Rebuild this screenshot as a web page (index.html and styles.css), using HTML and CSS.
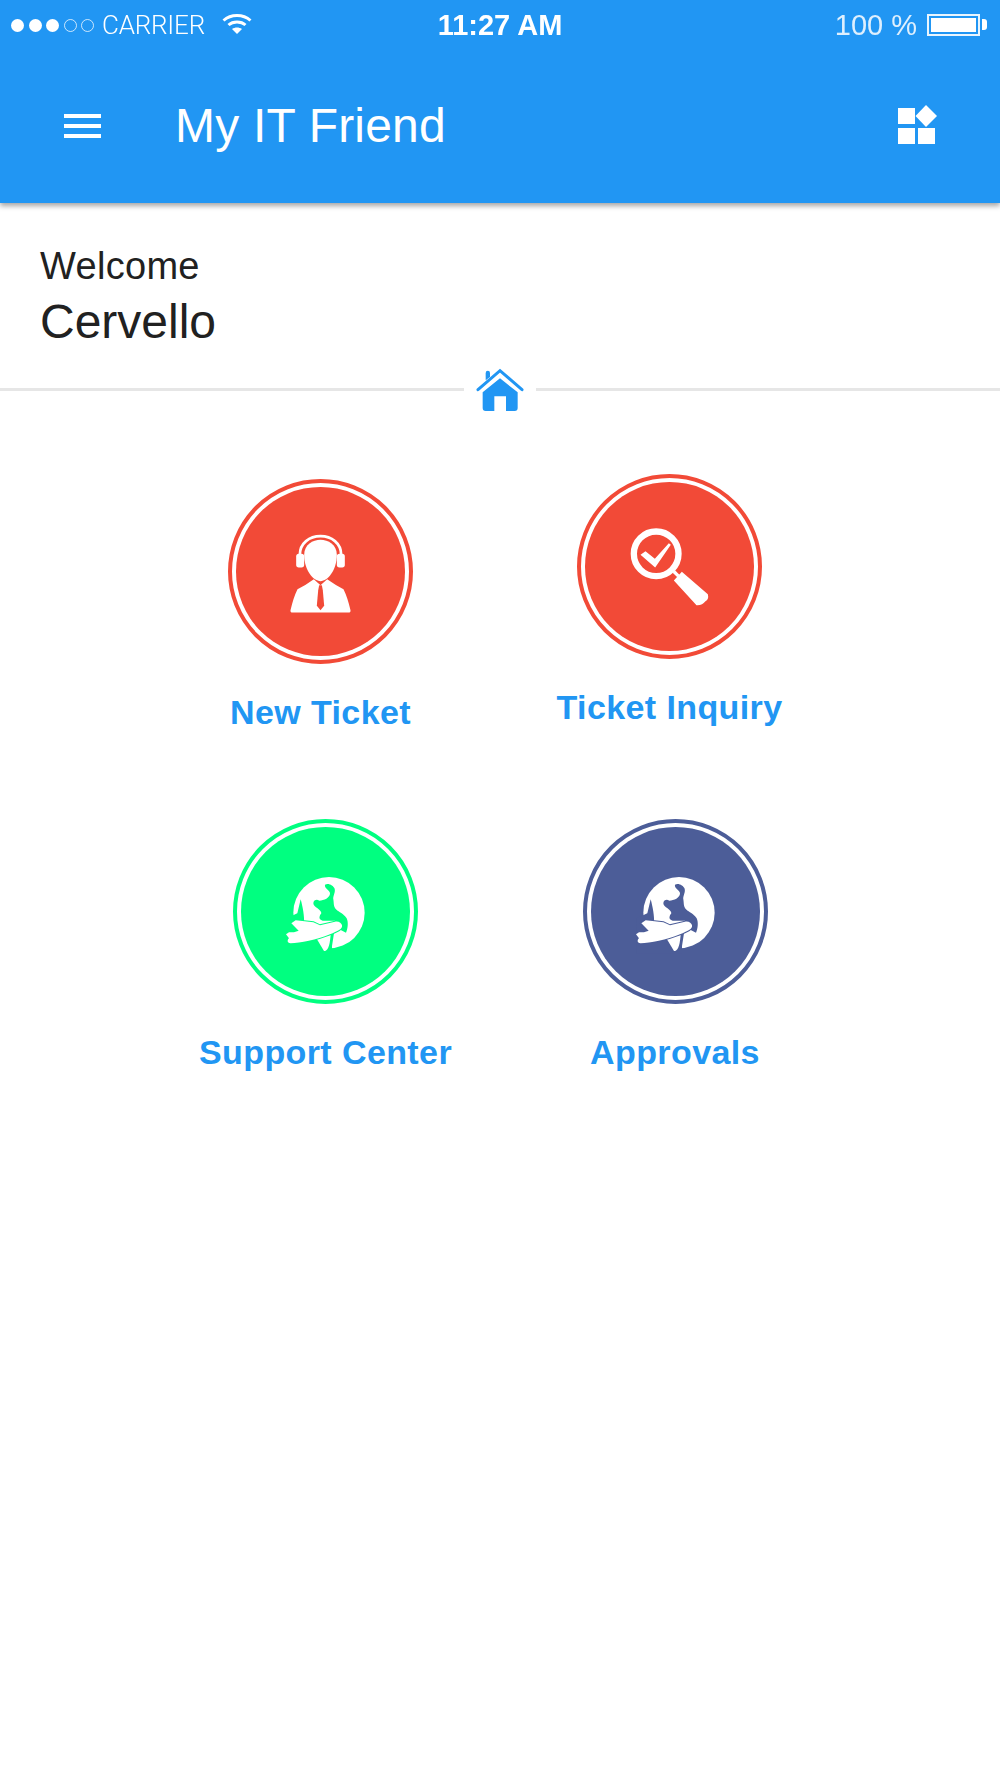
FILE: index.html
```html
<!DOCTYPE html>
<html lang="en">
<head>
<meta charset="utf-8">
<title>My IT Friend</title>
<link rel="stylesheet" href="styles.css">
</head>
<body>
<header class="appbar">
  <div class="status">
    <div class="status-left">
      <span class="dots">
        <i class="dot"></i><i class="dot"></i><i class="dot"></i><i class="dot dot-off"></i><i class="dot dot-off"></i>
      </span>
      <span class="carrier">CARRIER</span>
      <svg class="wifi" viewBox="0 0 30 21" aria-hidden="true">
        <path class="wifi-arc" d="M1.500 7.500C9 .8 21 .8 28.500 7.500"/>
        <path class="wifi-arc" d="M6.500 12C11 8 19 8 23.500 12"/>
        <path class="wifi-solid" d="M10 16C13 14 17 14 20 16L15 21Z"/>
      </svg>
    </div>
    <div class="time">11:27 AM</div>
    <div class="status-right">
      <span class="percent">100 %</span>
      <span class="battery"><span class="battery-fill"></span></span>
      <span class="battery-nub"></span>
    </div>
  </div>
  <div class="toolbar">
    <div class="menu"><i></i><i></i><i></i></div>
    <h1 class="title">My IT Friend</h1>
    <svg class="apps" viewBox="0 0 40 37" aria-hidden="true">
      <path d="M0 3H17V19H0ZM0 23H17V39H0ZM20 23H37V39H20Z"/>
      <path d="M28 0L39 11L28 22L17.500 11Z"/>
    </svg>
  </div>
</header>

<section class="welcome">
  <div class="welcome-small">Welcome</div>
  <div class="welcome-name">Cervello</div>
</section>

<div class="divider">
  <span class="rule"></span>
  <svg class="home" viewBox="105 55 150 135" aria-hidden="true">
    <path d="M137 92V70Q137 63 143.500 63T150 70V82Z"/>
    <path class="home-roof" d="M114 120L180 63L246 120"/>
    <path d="M128 128L180 86L233 128V175Q233 184 224 184H198V140H163V184H137Q128 184 128 175Z"/>
  </svg>
  <span class="rule"></span>
</div>

<main class="menu-grid">
  <div class="row row-one">
    <a class="tile tile-low">
      <span class="disc disc-red">
        <svg class="glyph" viewBox="77.500 81.500 507 507" aria-hidden="true">
          <path class="ink" d="M241 451Q250 412 262 388Q288 375 311 358L331 376L351 358Q375 375 400 388Q412 412 421 451Q422 458 415 458H247Q240 458 241 451Z"/>
          <path class="cut" d="M327 376H335L338 392L342 438L331 451L320 438L324 392Z"/>
          <path class="ink" d="M282 285C282 255 308 240 331 240S380 255 380 285C380 332 352 364 331 364S282 332 282 285Z"/>
          <path class="band" d="M269 285C269 250 298 229 331 229S393 250 393 285"/>
          <rect class="ink" x="258" y="282" width="24" height="41" rx="8"/>
          <rect class="ink" x="380" y="282" width="24" height="41" rx="8"/>
        </svg>
      </span>
      <span class="tile-label">New Ticket</span>
    </a>
    <a class="tile">
      <span class="disc disc-red">
        <svg class="glyph" viewBox="73.500 66.500 507 507" aria-hidden="true">
          <circle class="lens" cx="287" cy="282" r="67"/>
          <path class="ink" d="M240 285L255 274L283 297L325 250L331 255L284 323Z"/>
          <path class="neck" d="M340 335L354 349"/>
          <path class="ink" d="M340 362L364 336L442 403Q446 418 434 425Q426 437 408 436Z"/>
        </svg>
      </span>
      <span class="tile-label">Ticket Inquiry</span>
    </a>
  </div>
  <div class="row row-two">
    <a class="tile">
      <span class="disc disc-green">
        <svg class="glyph" viewBox="-117 -129 507 507" aria-hidden="true">
          <use href="#globe"/>
        </svg>
      </span>
      <span class="tile-label">Support Center</span>
    </a>
    <a class="tile">
      <span class="disc disc-navy">
        <svg class="glyph" viewBox="-117 -129 507 507" aria-hidden="true">
          <use href="#globe"/>
        </svg>
      </span>
      <span class="tile-label">Approvals</span>
    </a>
  </div>
</main>

<svg class="defs" aria-hidden="true">
  <defs>
    <g id="globe">
      <circle class="ink" cx="147" cy="128" r="107"/>
      <path class="cut" d="M62 88L52 130L20 145V250H156V228L165 170L72 160C74 140 68 110 62 88Z"/>
      <path class="cut" d="M135 44C145 38 160 46 164 56C167 68 158 78 160 88C162 100 160 110 168 118C178 128 190 130 200 145C206 158 203 178 198 188L172 175L165 152H128C114 148 118 138 124 130C124 120 108 114 102 106C96 96 106 84 118 92C132 92 150 84 150 70C150 60 132 55 135 44Z"/>
      <path class="plane" d="M110 206L132 243C142 243 149 232 152 194Z"/>
      <path class="plane" d="M186 166C189 177 172 184 150 193C110 209 60 220 32 220C20 220 22 208 27 205L18 193L27 187H42L56 182L34 160L47 151L100 157L120 166L165 155C177 153 185 160 186 166Z"/>
    </g>
  </defs>
</svg>
</body>
</html>
```

FILE: styles.css
```css
* {
  box-sizing: border-box;
}

html,
body {
  margin: 0;
  padding: 0;
  background: #fff;
}

body {
  height: 1778px;
  overflow: hidden;
  font-family: "Liberation Sans", Arial, sans-serif;
  color: #212121;
}

/* App bar */
.appbar {
  height: 203px;
  background: #2196f3;
  color: #fff;
  box-shadow: 0 3px 5px rgba(0, 0, 0, 0.35);
}

.status {
  height: 50px;
  display: grid;
  grid-template-columns: 1fr auto 1fr;
  align-items: center;
  filter: blur(0.6px);
}

.status-left {
  display: flex;
  align-items: center;
  padding-left: 11px;
}

.dots {
  display: flex;
  gap: 4.500px;
}

.dot {
  width: 13px;
  height: 13px;
  border-radius: 50%;
  background: #fff;
}

.dot-off {
  background: none;
  border: 1px solid rgba(255, 255, 255, 0.75);
}

.carrier {
  margin-left: 8px;
  font-family: Roboto, "Liberation Sans", sans-serif;
  font-weight: 300;
  font-size: 26px;
  line-height: 30px;
  letter-spacing: -0.2px;
  color: #fff;
}

.wifi {
  width: 30px;
  height: 21px;
  margin-left: 17px;
  margin-top: -4px;
}

.wifi-arc {
  fill: none;
  stroke: #fff;
  stroke-width: 3px;
}

.wifi-solid {
  fill: #fff;
}

.time {
  font-weight: 700;
  font-size: 29px;
  line-height: 30px;
  margin-top: -1px;
}

.status-right {
  display: flex;
  align-items: center;
  justify-content: flex-end;
  padding-right: 13px;
  margin-top: -1px;
}

.percent {
  font-size: 29px;
  line-height: 30px;
  color: rgba(255, 255, 255, 0.85);
  margin-right: 10px;
}

.battery {
  width: 53px;
  height: 22px;
  padding: 2px;
  border: 2px solid rgba(255, 255, 255, 0.9);
  display: flex;
}

.battery-fill {
  flex: 1;
  background: #fff;
}

.battery-nub {
  width: 5px;
  height: 11px;
  margin-left: 2px;
  background: #fff;
  border-radius: 0 3px 3px 0;
}

.toolbar {
  height: 151px;
  display: flex;
  align-items: center;
  padding-left: 64px;
  padding-right: 62px;
}

.menu {
  width: 37px;
  display: flex;
  flex-direction: column;
  gap: 6px;
}

.menu i {
  height: 4px;
  background: #fff;
}

.title {
  margin: 0 0 0 74px;
  flex: 1;
  font-weight: 400;
  font-size: 48px;
  line-height: 56px;
  letter-spacing: 0.2px;
}

.apps {
  width: 40px;
  height: 37px;
  margin-top: -5px;
  fill: #fff;
  overflow: visible;
}

/* Welcome */
.welcome {
  padding: 40px 0 0 40px;
  height: 182px;
}

.welcome-small {
  font-size: 38px;
  line-height: 46px;
  letter-spacing: 0.3px;
}

.welcome-name {
  font-size: 48px;
  line-height: 56px;
  margin-top: 5px;
}

/* Divider */
.divider {
  display: flex;
  align-items: center;
  height: 44px;
  margin-top: -18px;
}

.rule {
  flex: 1;
  height: 3px;
  background: #e6e6e6;
}

.home {
  width: 50px;
  height: 45px;
  margin: 3px 11px 0;
  fill: #2196f3;
}

.home-roof {
  fill: none;
  stroke: #2196f3;
  stroke-width: 9px;
  stroke-linecap: round;
}

/* Tiles */
.menu-grid {
  display: flex;
  flex-direction: column;
  gap: 87px;
  padding-top: 63px;
}

.row {
  display: flex;
  align-items: flex-start;
}

.row-one {
  padding-left: 228px;
  gap: 164px;
}

.row-two {
  padding-left: 233px;
  gap: 164.500px;
}

.tile {
  width: 185px;
  display: flex;
  flex-direction: column;
  align-items: center;
}

.tile-low {
  margin-top: 5px;
}

.disc {
  width: 185px;
  height: 185px;
  border-radius: 50%;
  border: 4px solid var(--tone);
  padding: 4px;
  background: var(--tone);
  background-clip: content-box;
  display: block;
}

.disc-red {
  --tone: #f24a37;
}

.disc-green {
  --tone: #00ff80;
}

.disc-navy {
  --tone: #4c5d98;
}

.glyph {
  display: block;
  width: 100%;
  height: 100%;
}

.ink {
  fill: #fff;
}

.cut {
  fill: var(--tone);
}

.band {
  fill: none;
  stroke: #fff;
  stroke-width: 8px;
}

.lens {
  fill: none;
  stroke: #fff;
  stroke-width: 19px;
}

.neck {
  fill: none;
  stroke: #fff;
  stroke-width: 10px;
}

.plane {
  fill: #fff;
  stroke: var(--tone);
  stroke-width: 6px;
  paint-order: stroke;
}

.tile-label {
  margin-top: 28px;
  white-space: nowrap;
  font-weight: 700;
  font-size: 34px;
  line-height: 40px;
  letter-spacing: 0.4px;
  color: #2196f3;
}

.defs {
  position: absolute;
  width: 0;
  height: 0;
}
```
